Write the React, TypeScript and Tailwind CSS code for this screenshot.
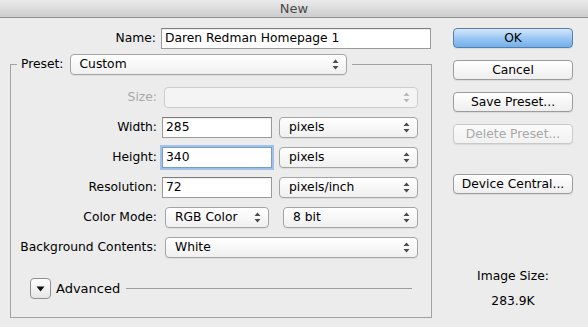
import React from 'react';

const font = "font-['Lucida_Grande','DejaVu_Sans',sans-serif]";

function Arrows({ dim }: { dim?: boolean }) {
  const c = dim ? '#b8b8b8' : '#4a4a4a';
  return (
    <svg width="7" height="11" viewBox="0 0 7 11" className="shrink-0">
      <path d="M3.5 0.5 L6.5 4 L0.5 4 Z" fill={c} />
      <path d="M3.5 10.5 L6.5 7 L0.5 7 Z" fill={c} />
    </svg>
  );
}

function Select({ value, className, disabled }: { value?: string; className: string; disabled?: boolean }) {
  return (
    <div
      className={`flex h-[21px] shrink-0 items-center justify-between rounded-[4px] border pl-[9px] pr-[7px] ${
        disabled
          ? 'border-[#cdcdcd] bg-[#f4f4f4]'
          : 'border-[#a4a4a4] bg-gradient-to-b from-white to-[#f0f0f0] shadow-[0_1px_0_rgba(0,0,0,0.06)]'
      } ${className}`}
    >
      <span className="leading-none">{value}</span>
      <Arrows dim={disabled} />
    </div>
  );
}

function TextField({ value, className, focused }: { value: string; className: string; focused?: boolean }) {
  return (
    <div
      className={`flex h-[21px] shrink-0 items-center border bg-white pl-[3px] ${
        focused
          ? 'border-[#7a9cc8] shadow-[0_0_0_2px_#9fc1ea]'
          : 'border-[#9a9a9a] border-t-[#7d7d7d] shadow-[inset_0_1px_1px_rgba(0,0,0,0.08)]'
      } ${className}`}
    >
      {value}
    </div>
  );
}

function Row({ label, dim, children }: { label: string; dim?: boolean; children: React.ReactNode }) {
  return (
    <div className="flex h-[21px] items-center">
      <span className={`w-[146px] shrink-0 text-right ${dim ? 'text-[#a9a9a9]' : ''}`}>{label}</span>
      {children}
    </div>
  );
}

function Btn({ label, primary, disabled, className = '' }: { label: string; primary?: boolean; disabled?: boolean; className?: string }) {
  const look = primary
    ? 'border-[#5b7ea9] bg-gradient-to-b from-[#d4e7fa] via-[#9cc8f2] to-[#71b0ec]'
    : disabled
      ? 'border-[#c9c9c9] bg-gradient-to-b from-[#fbfbfb] to-[#f1f1f1] text-[#a8a8a8]'
      : 'border-[#9b9b9b] bg-gradient-to-b from-white to-[#eeeeee]';
  return (
    <div className={`flex h-[20px] w-[120px] items-center justify-center rounded-[4px] border shadow-[0_1px_0_rgba(0,0,0,0.07)] ${look} ${className}`}>
      {label}
    </div>
  );
}

export default function App() {
  return (
    <div className={`h-[327px] w-[588px] overflow-hidden bg-[#ececec] text-[12.3px] text-black ${font}`}>
      <div className="h-[18px] border-b border-[#8e8e8e] bg-gradient-to-b from-[#ebebeb] to-[#cdcdcd] text-center text-[13px] leading-[17px] text-[#4a4a4a]">
        New
      </div>

      <div className="flex pt-[10px]">
        <div className="ml-[10px] w-[422px]">
          <div className="flex h-[21px] items-center">
            <span className="w-[146px] shrink-0 text-right">Name:</span>
            <TextField value="Daren Redman Homepage 1" className="ml-[5px] w-[270px]" />
          </div>

          <fieldset className="mt-[5px] border border-[#a2a2a2] pb-[18px] pt-[12px]">
            <legend className="ml-[6px] flex items-center px-[4px] pr-[5px]">
              <span>Preset:</span>
              <Select value="Custom" className="ml-[6px] h-[20px] w-[277px]" />
            </legend>

            <div className="flex flex-col gap-[9px]">
              <Row label="Size:" dim>
                <Select className="ml-[7px] h-[20px] w-[254px]" disabled />
              </Row>
              <Row label="Width:">
                <TextField value="285" className="ml-[5px] w-[110px]" />
                <Select value="pixels" className="ml-[7px] w-[139px]" />
              </Row>
              <Row label="Height:">
                <TextField value="340" className="ml-[5px] w-[110px]" focused />
                <Select value="pixels" className="ml-[7px] w-[139px]" />
              </Row>
              <Row label="Resolution:">
                <TextField value="72" className="ml-[5px] w-[110px]" />
                <Select value="pixels/inch" className="ml-[7px] w-[139px]" />
              </Row>
              <Row label="Color Mode:">
                <Select value="RGB Color" className="ml-[8px] w-[104px]" />
                <Select value="8 bit" className="ml-[14px] w-[135px]" />
              </Row>
              <Row label="Background Contents:">
                <Select value="White" className="ml-[8px] w-[253px]" />
              </Row>
            </div>

            <div className="mt-[20px] flex h-[21px] items-center pl-[19px] pr-[19px]">
              <div className="flex h-[21px] w-[21px] items-center justify-center rounded-[4px] border border-[#8f8f8f] bg-gradient-to-b from-white to-[#e6e6e6]">
                <svg width="9" height="6" viewBox="0 0 9 6">
                  <path d="M0.5 0.5 L8.5 0.5 L4.5 5.5 Z" fill="#111" />
                </svg>
              </div>
              <span className="ml-[5px] text-[13px]">Advanced</span>
              <div className="ml-[6px] h-px flex-1 bg-[#9d9d9d]" />
            </div>
          </fieldset>
        </div>

        <div className="ml-[21px] flex w-[120px] flex-col">
          <Btn label="OK" primary />
          <Btn label="Cancel" className="mt-[12px]" />
          <Btn label="Save Preset..." className="mt-[12px]" />
          <Btn label="Delete Preset..." disabled className="mt-[12px]" />
          <Btn label="Device Central..." className="mt-[30px]" />
          <div className="mt-[70px] text-center leading-[25px]">
            <div>Image Size:</div>
            <div>283.9K</div>
          </div>
        </div>
      </div>
    </div>
  );
}
